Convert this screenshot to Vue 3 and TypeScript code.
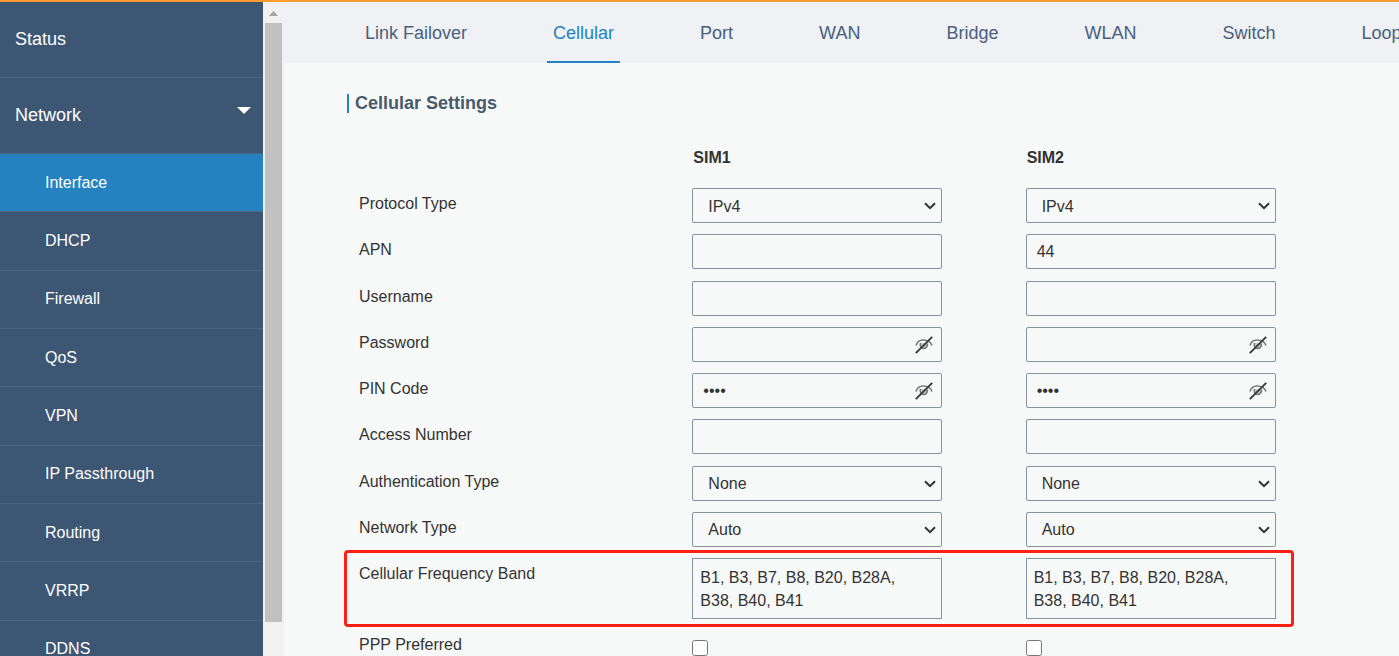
<script setup lang="ts">
import { reactive } from 'vue'

type FieldKind = 'select' | 'text' | 'password'

interface Field {
  key: string
  label: string
  kind: FieldKind
  options?: string[]
}

const subItems: string[] = [
  'Interface',
  'DHCP',
  'Firewall',
  'QoS',
  'VPN',
  'IP Passthrough',
  'Routing',
  'VRRP',
  'DDNS',
]

const tabs: string[] = ['Link Failover', 'Cellular', 'Port', 'WAN', 'Bridge', 'WLAN', 'Switch', 'Loopback']

const fields: Field[] = [
  { key: 'protocol', label: 'Protocol Type', kind: 'select', options: ['IPv4'] },
  { key: 'apn', label: 'APN', kind: 'text' },
  { key: 'username', label: 'Username', kind: 'text' },
  { key: 'password', label: 'Password', kind: 'password' },
  { key: 'pin', label: 'PIN Code', kind: 'password' },
  { key: 'access', label: 'Access Number', kind: 'text' },
  { key: 'auth', label: 'Authentication Type', kind: 'select', options: ['None'] },
  { key: 'network', label: 'Network Type', kind: 'select', options: ['Auto'] },
]

interface Sim {
  id: string
  name: string
  values: Record<string, string>
  bands: string
  ppp: boolean
}

const bands = 'B1, B3, B7, B8, B20, B28A, B38, B40, B41'

function createSim(id: string, name: string, apn: string): Sim {
  return {
    id,
    name,
    values: {
      protocol: 'IPv4',
      apn,
      username: '',
      password: '',
      pin: '0000',
      access: '',
      auth: 'None',
      network: 'Auto',
    },
    bands,
    ppp: false,
  }
}

const sims = reactive<Sim[]>([createSim('sim1', 'SIM1', ''), createSim('sim2', 'SIM2', '44')])
const revealed = reactive<Record<string, boolean>>({})
</script>

<template>
  <div class="page">
    <nav class="sidebar" aria-label="Main menu">
      <a class="top-item" href="#status">Status</a>
      <a class="top-item" href="#network">
        Network
        <svg class="caret" width="14" height="7" viewBox="0 0 14 7" aria-hidden="true">
          <path d="M0 0H14L7 7Z" fill="#fff" />
        </svg>
      </a>
      <div class="sub-menu">
        <a
          v-for="(item, i) in subItems"
          :key="item"
          :href="'#' + item.toLowerCase().replace(' ', '-')"
          class="sub-item"
          :class="{ active: i === 0 }"
        >{{ item }}</a>
      </div>
    </nav>
    <div class="scrollbar" aria-hidden="true">
      <svg class="scroll-arrow" width="9" height="5" viewBox="0 0 9 5">
        <path d="M0 5L4.5 0L9 5Z" fill="#a3a3a3" />
      </svg>
      <div class="scroll-thumb"></div>
    </div>

    <main class="main">
      <nav class="tabs" aria-label="Interface sections">
        <a
          v-for="tab in tabs"
          :key="tab"
          :href="'#' + tab.toLowerCase().replace(' ', '-')"
          class="tab"
          :class="{ current: tab === 'Cellular' }"
        >{{ tab }}</a>
      </nav>

      <form class="settings" @submit.prevent>
        <h2 class="title">Cellular Settings</h2>

        <div class="row head">
          <span></span>
          <strong v-for="sim in sims" :key="sim.id">{{ sim.name }}</strong>
        </div>

        <div class="fields">
          <div v-for="field in fields" :key="field.key" class="row">
            <label class="label" :for="'sim1-' + field.key">{{ field.label }}</label>
            <div v-for="sim in sims" :key="sim.id" class="cell">
              <select
                v-if="field.kind === 'select'"
                :id="sim.id + '-' + field.key"
                v-model="sim.values[field.key]"
                class="control select"
                :aria-label="sim.name + ' ' + field.label"
              >
                <option v-for="option in field.options" :key="option">{{ option }}</option>
              </select>
              <input
                v-else
                :id="sim.id + '-' + field.key"
                v-model="sim.values[field.key]"
                class="control"
                :type="field.kind === 'password' && !revealed[sim.id + field.key] ? 'password' : 'text'"
                :aria-label="sim.name + ' ' + field.label"
                autocomplete="off"
              />
              <svg
                v-if="field.kind === 'select'"
                class="chevron"
                width="12"
                height="8"
                viewBox="0 0 12 8"
                fill="none"
                aria-hidden="true"
              >
                <path d="M1 1.200L6 6.200L11 1.200" stroke="#333" stroke-width="2" />
              </svg>
              <button
                v-if="field.kind === 'password'"
                type="button"
                class="eye"
                :aria-label="'Show ' + sim.name + ' ' + field.label"
                @click="revealed[sim.id + field.key] = !revealed[sim.id + field.key]"
              >
                <svg width="18" height="18" viewBox="0 0 18 18" fill="none">
                  <path d="M1 9.500C2 6 4.500 4 8 4C12 4 15.500 5 17 9.500" stroke="#777" stroke-width="1.600" />
                  <path d="M5.500 7C4.500 10 6 12.500 8.500 12.500C11.500 12.500 12.500 10.500 12.500 7.500" fill="#c4c4c4" stroke="#777" stroke-width="1.500" />
                  <path d="M0.800 17.200L17.200 0.800" stroke="#3a3a3a" stroke-width="1.900" />
                </svg>
              </button>
            </div>
          </div>
        </div>

        <div class="row band">
          <label class="label" for="sim1-bands">Cellular Frequency Band</label>
          <div v-for="sim in sims" :key="sim.id" class="cell">
            <textarea
              :id="sim.id + '-bands'"
              v-model="sim.bands"
              class="control area"
              rows="2"
              :aria-label="sim.name + ' Cellular Frequency Band'"
            ></textarea>
          </div>
        </div>

        <div class="row ppp">
          <label class="label" for="sim1-ppp">PPP Preferred</label>
          <div v-for="sim in sims" :key="sim.id" class="cell">
            <input
              :id="sim.id + '-ppp'"
              v-model="sim.ppp"
              class="check"
              type="checkbox"
              :aria-label="sim.name + ' PPP Preferred'"
            />
          </div>
        </div>
      </form>
    </main>
  </div>
</template>

<style>
html,
body {
  margin: 0;
  overflow: hidden;
}
</style>

<style scoped>
.page {
  box-sizing: border-box;
  display: flex;
  height: 100vh;
  overflow: hidden;
  border-top: 2px solid #ff9a2e;
  background: #f7f9f8;
  color: #333;
  font-family: 'Liberation Sans', Arial, sans-serif;
  font-size: 16px;
}

.sidebar {
  flex: 0 0 263px;
  overflow: hidden;
  background: #3c5674;
}

.top-item {
  box-sizing: border-box;
  display: flex;
  align-items: center;
  justify-content: space-between;
  height: 76px;
  padding: 0 12px 0 15px;
  border-bottom: 1px solid #4b6482;
  color: #fff;
  font-size: 18px;
  text-decoration: none;
}

.caret {
  margin-bottom: 10px;
}

.sub-menu {
  display: grid;
  grid-auto-rows: 1fr;
  height: 525px;
}

.sub-item {
  display: flex;
  align-items: center;
  padding-left: 45px;
  border-bottom: 1px solid #4b6482;
  color: #fff;
  text-decoration: none;
}

.sub-item.active {
  background: #2482c1;
}

.scrollbar {
  box-sizing: border-box;
  display: flex;
  flex: 0 0 21px;
  flex-direction: column;
  align-items: center;
  padding: 9px 2px 34px;
  background: #f1f1f1;
}

.scroll-arrow {
  flex: none;
  margin-bottom: 7px;
}

.scroll-thumb {
  flex: 1;
  width: 17px;
  background: #c1c1c1;
}

.main {
  flex: 1;
  min-width: 0;
}

.tabs {
  display: flex;
  gap: 74px;
  height: 61px;
  padding-left: 75px;
  overflow: hidden;
  background: #f0f1f4;
}

.tab {
  box-sizing: border-box;
  flex: none;
  height: 61px;
  padding: 0 6px;
  border-bottom: 2px solid transparent;
  color: #48607e;
  font-size: 18px;
  line-height: 63px;
  text-decoration: none;
}

.tab.current {
  border-color: #2482c1;
  color: #2482c1;
}

.settings {
  padding: 31px 40px 0 75px;
}

.title {
  margin: 0 0 0 -12px;
  padding-left: 6px;
  border-left: 2px solid #2482c1;
  color: #475b6c;
  font-size: 18px;
  line-height: 19px;
}

.row {
  display: grid;
  grid-template-columns: repeat(3, 1fr);
  align-items: start;
}

.head {
  padding: 34px 0 20px;
  line-height: 21px;
}

.head strong {
  padding-left: 1px;
}

.fields {
  display: grid;
  grid-auto-rows: 1fr;
  height: 370px;
}

.label {
  line-height: 31px;
}

.cell {
  position: relative;
  display: flex;
  width: 75%;
}

.control {
  box-sizing: border-box;
  width: 100%;
  height: 35px;
  margin: 0;
  padding: 0 10px;
  border: 1px solid #87929e;
  border-radius: 2px;
  outline: none;
  background: #f7f9f8;
  color: #333;
  font: inherit;
}

.select {
  padding: 1px 24px 0 15px;
  appearance: none;
}

.chevron {
  position: absolute;
  top: 14px;
  right: 6px;
  pointer-events: none;
}

.area {
  height: 61px;
  padding: 7px 24px 7px 7px;
  border-radius: 0;
  line-height: 23px;
  resize: none;
  overflow: hidden;
}

.eye {
  position: absolute;
  top: 9px;
  right: 9px;
  display: flex;
  padding: 0;
  border: 0;
  background: none;
  cursor: pointer;
}

.band {
  position: relative;
}

.band::after {
  position: absolute;
  inset: -8px 65px -8px -15px;
  border: 3px solid #ff1f14;
  border-radius: 4px;
  content: '';
  pointer-events: none;
}

.ppp {
  padding-top: 10px;
}

.check {
  width: 16px;
  height: 16px;
  margin: 11px 0 0;
}
</style>
